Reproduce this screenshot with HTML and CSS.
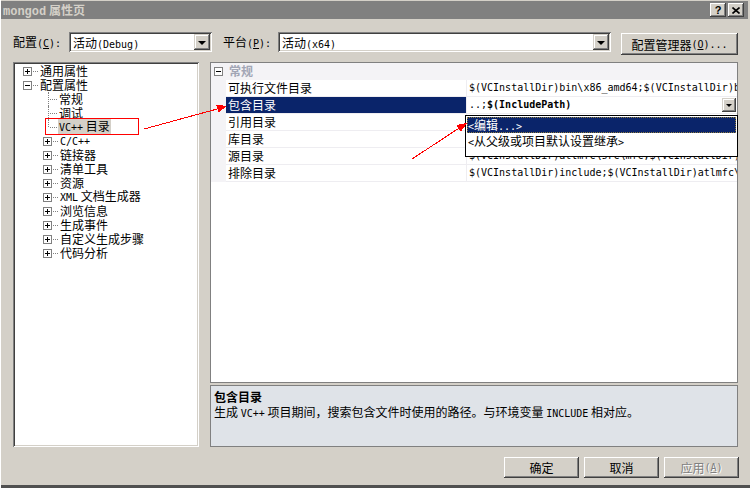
FILE: index.html
```html
<!DOCTYPE html>
<html lang="zh-CN">
<head>
  <meta charset="UTF-8">
  <title>mongod 属性页</title>
  <link rel="stylesheet" href="styles.css">
</head>
<body>

  <div class="window">
    <div class="titlebar">
      <span class="title"><span class="en">mongod</span> 属性页</span>
      <div class="caption-btns">
        <span class="cap-btn">?</span>
        <span class="cap-btn">
          <svg width="8" height="7" viewBox="0 0 8 7"><path d="M0.5 0.5 L7.5 6.5 M7.5 0.5 L0.5 6.5" stroke="#000" stroke-width="1.6" fill="none"/></svg>
        </span>
      </div>
    </div>

    <div class="content">
      <div class="config-row">
        <span class="lbl lbl-config">配置<span class="en">(<u>C</u>):</span></span>
        <div class="combo combo-config">
          <span class="combo-text">活动<span class="en">(Debug)</span></span>
          <span class="drop-btn"></span>
        </div>
        <span class="lbl lbl-platform">平台<span class="en">(<u>P</u>):</span></span>
        <div class="combo combo-platform">
          <span class="combo-text">活动<span class="en">(x64)</span></span>
          <span class="drop-btn"></span>
        </div>
        <button class="btn btn-manager">配置管理器<span class="en">(<u>O</u>)...</span></button>
      </div>

      <div class="main">
        <div class="tree">
          <div class="node lvl0"><span class="box plus"></span><span class="dots"></span><span class="label">通用属性</span></div>
          <div class="node lvl0"><span class="box"></span><span class="dots"></span><span class="label">配置属性</span></div>
          <div class="node leaf"><span class="stem"></span><span class="label">常规</span></div>
          <div class="node leaf"><span class="stem"></span><span class="label">调试</span></div>
          <div class="node leaf"><span class="stem last"></span><span class="label selected"><span class="en">VC++</span> 目录</span></div>
          <div class="node lvl1"><span class="box plus"></span><span class="dots"></span><span class="label"><span class="en">C/C++</span></span></div>
          <div class="node lvl1"><span class="box plus"></span><span class="dots"></span><span class="label">链接器</span></div>
          <div class="node lvl1"><span class="box plus"></span><span class="dots"></span><span class="label">清单工具</span></div>
          <div class="node lvl1"><span class="box plus"></span><span class="dots"></span><span class="label">资源</span></div>
          <div class="node lvl1"><span class="box plus"></span><span class="dots"></span><span class="label"><span class="en">XML</span> 文档生成器</span></div>
          <div class="node lvl1"><span class="box plus"></span><span class="dots"></span><span class="label">浏览信息</span></div>
          <div class="node lvl1"><span class="box plus"></span><span class="dots"></span><span class="label">生成事件</span></div>
          <div class="node lvl1"><span class="box plus"></span><span class="dots"></span><span class="label">自定义生成步骤</span></div>
          <div class="node lvl1"><span class="box plus"></span><span class="dots"></span><span class="label">代码分析</span></div>
        </div>

        <div class="right">
          <div class="pg">
            <div class="pg-row cat">
              <span class="pg-margin"><span class="box"></span></span>
              <span class="cat-name">常规</span>
            </div>
            <div class="pg-row">
              <span class="pg-margin"></span>
              <span class="pg-name">可执行文件目录</span>
              <span class="pg-val">$(VCInstallDir)bin\x86_amd64;$(VCInstallDir)bin;$(WindowsSdkDir)bin\NETFX 4.0 Tools;$(WindowsSdkDir)bin;$(VSInstallDir)Common7\Tools\bin;$(PATH);</span>
            </div>
            <div class="pg-row sel">
              <span class="pg-margin"></span>
              <span class="pg-name">包含目录</span>
              <span class="pg-val edit"><span>..;<b>$(IncludePath)</b></span><span class="drop-btn small"></span></span>
            </div>
            <div class="pg-row">
              <span class="pg-margin"></span>
              <span class="pg-name">引用目录</span>
              <span class="pg-val">$(VCInstallDir)atlmfc\lib\amd64;$(VCInstallDir)lib\amd64</span>
            </div>
            <div class="pg-row">
              <span class="pg-margin"></span>
              <span class="pg-name">库目录</span>
              <span class="pg-val">$(VCInstallDir)lib\amd64;$(VCInstallDir)atlmfc\lib\amd64;$(WindowsSdkDir)lib\x64;</span>
            </div>
            <div class="pg-row">
              <span class="pg-margin"></span>
              <span class="pg-name">源目录</span>
              <span class="pg-val">$(VCInstallDir)atlmfc\src\mfc;$(VCInstallDir)atlmfc\src\mfcm;$(VCInstallDir)atlmfc\src\atl;</span>
            </div>
            <div class="pg-row">
              <span class="pg-margin"></span>
              <span class="pg-name">排除目录</span>
              <span class="pg-val">$(VCInstallDir)include;$(VCInstallDir)atlmfc\include;$(WindowsSdkDir)include;$(FrameworkSDKDir)\include;</span>
            </div>

            <!-- open drop-down list of the 包含目录 value -->
            <div class="popup">
              <div class="popup-item hl"><span class="en">&lt;</span>编辑<span class="en">...&gt;</span></div>
              <div class="popup-item"><span class="en">&lt;</span>从父级或项目默认设置继承<span class="en">&gt;</span></div>
            </div>
          </div>

          <div class="desc">
            <div class="desc-title">包含目录</div>
            <div class="desc-text">生成 <span class="en">VC++</span> 项目期间，搜索包含文件时使用的路径。与环境变量 <span class="en">INCLUDE</span> 相对应。</div>
          </div>
        </div>
      </div>

      <div class="actions">
        <button class="btn">确定</button>
        <button class="btn">取消</button>
        <button class="btn disabled">应用<span class="en">(<u>A</u>)</span></button>
      </div>
    </div>

    <!-- red annotation marks drawn over the dialog -->
    <svg class="marks" width="750" height="488" viewBox="0 0 750 488">
      <rect x="45.5" y="118.5" width="93" height="16" fill="none" stroke="#f00" stroke-width="1"/>
      <line x1="144" y1="129" x2="219" y2="108.5" stroke="#f00" stroke-width="1"/>
      <polygon points="227,106 218.4,112.5 216.3,104.8" fill="#f00"/>
      <line x1="412" y1="159" x2="460" y2="127.5" stroke="#f00" stroke-width="1"/>
      <polygon points="467,123 460.8,131.8 456.4,125.1" fill="#f00"/>
    </svg>
  </div>

</body>
</html>
```

FILE: styles.css
```css
body {
  margin: 0;
  background: #d4d0c8;
  font-family: "Noto Sans CJK SC", sans-serif;
  font-size: 12px;
  color: #000;
}

.en {
  font-family: "DejaVu Sans Mono", monospace;
  font-size: 10px;
}

.window {
  position: relative;
  width: 750px;
  height: 488px;
  box-sizing: border-box;
  padding: 1px 2px 3px 1px;
  background: #d4d0c8;
  box-shadow: inset 1px 0 #fff, inset 0 -3px #505050;
  display: flex;
  flex-direction: column;
}

/* title bar */
.titlebar {
  height: 18px;
  background: #808080;
  color: #d4d0c8;
  font-weight: bold;
  display: flex;
  align-items: center;
  justify-content: space-between;
  padding: 0 4px 0 2px;
}

.title .en {
  font-family: "Liberation Mono", monospace;
  font-size: 12px;
  font-weight: bold;
}

.caption-btns {
  display: flex;
  gap: 2px;
}

.cap-btn {
  width: 16px;
  height: 14px;
  box-sizing: border-box;
  display: flex;
  align-items: center;
  justify-content: center;
  background: #d4d0c8;
  color: #000;
  font-family: "Liberation Sans", sans-serif;
  font-size: 11px;
  font-weight: bold;
  box-shadow: inset -1px -1px #404040, inset 1px 1px #fff, inset -2px -2px #808080;
}

.content {
  flex: 1;
  display: flex;
  flex-direction: column;
  padding: 0 10px 0 12px;
}

/* configuration row */
.config-row {
  margin-top: 13px;
  height: 20px;
  display: flex;
  align-items: flex-start;
}

.lbl {
  height: 20px;
  line-height: 20px;
  white-space: nowrap;
}

.lbl-config {
  width: 56px;
}

.lbl-platform {
  width: 55px;
  margin-left: 11px;
}

.combo {
  height: 20px;
  box-sizing: border-box;
  padding: 2px;
  background: #fff;
  display: flex;
  align-items: center;
  justify-content: space-between;
  box-shadow: inset 1px 1px #808080, inset -1px -1px #fff, inset 2px 2px #404040, inset -2px -2px #d4d0c8;
}

.combo-config {
  width: 143px;
}

.combo-platform {
  width: 333px;
}

.combo-text {
  padding-left: 2px;
  white-space: nowrap;
}

.drop-btn {
  width: 16px;
  height: 16px;
  flex: none;
  box-sizing: border-box;
  display: flex;
  align-items: center;
  justify-content: center;
  background: #d4d0c8;
  box-shadow: inset -1px -1px #404040, inset 1px 1px #d4d0c8, inset -2px -2px #808080, inset 2px 2px #fff;
}

.drop-btn::after {
  content: "";
  border-left: 4px solid transparent;
  border-right: 4px solid transparent;
  border-top: 4px solid #000;
  margin-top: 1px;
}

.drop-btn.small {
  width: 14px;
  height: 14px;
  margin-right: 1px;
}

.drop-btn.small::after {
  border-left-width: 3px;
  border-right-width: 3px;
  border-top-width: 3px;
}

.btn {
  width: 75px;
  height: 21px;
  padding: 0;
  border: none;
  box-sizing: border-box;
  display: flex;
  align-items: center;
  justify-content: center;
  background: #d4d0c8;
  color: #000;
  font-family: inherit;
  font-size: 12px;
  white-space: nowrap;
  box-shadow: inset -1px -1px #404040, inset 1px 1px #fff, inset -2px -2px #808080, inset 2px 2px #d4d0c8;
}

.btn-manager {
  width: 117px;
  height: 22px;
  margin-top: 1px;
  margin-left: 10px;
}

.btn.disabled {
  color: #808080;
  text-shadow: 1px 1px #fff;
}

/* main area */
.main {
  margin-top: 10px;
  height: 385px;
  display: flex;
  gap: 11px;
}

.tree {
  width: 186px;
  flex: none;
  box-sizing: border-box;
  padding: 2px;
  background: #fff;
  box-shadow: inset 1px 1px #808080, inset -1px -1px #fff, inset 2px 2px #404040, inset -2px -2px #d4d0c8;
}

.node {
  height: 14px;
  display: flex;
  align-items: center;
  white-space: nowrap;
}

.lvl0 {
  padding-left: 8px;
}

.lvl1 {
  padding-left: 28px;
}

.leaf {
  padding-left: 33px;
}

.box {
  width: 9px;
  height: 9px;
  flex: none;
  box-sizing: border-box;
  border: 1px solid #808080;
  background: #fff;
  position: relative;
}

.box::before {
  content: "";
  position: absolute;
  left: 1px;
  top: 3px;
  width: 5px;
  height: 1px;
  background: #000;
}

.box.plus::after {
  content: "";
  position: absolute;
  left: 3px;
  top: 1px;
  width: 1px;
  height: 5px;
  background: #000;
}

.dots {
  width: 5px;
  margin-left: 1px;
  margin-right: 1px;
  border-top: 1px dotted #808080;
}

.stem {
  width: 8px;
  height: 14px;
  flex: none;
  align-self: flex-start;
  margin-right: 1px;
  border-left: 1px dotted #808080;
  position: relative;
}

.stem.last {
  height: 7px;
}

.stem::after {
  content: "";
  position: absolute;
  left: 1px;
  top: 7px;
  width: 7px;
  border-top: 1px dotted #808080;
}

.label {
  padding: 0 1px;
  line-height: 14px;
}

.label.selected {
  background: #d4d0c8;
}

/* property grid */
.right {
  flex: 1;
  display: flex;
  flex-direction: column;
  gap: 2px;
}

.pg {
  position: relative;
  height: 321px;
  box-sizing: border-box;
  border: 1px solid #808080;
  background: #fff;
}

.pg-row {
  display: grid;
  grid-template-columns: 15px 240px 1fr;
  height: 17px;
}

.pg-margin {
  background: #f4f3f6;
  display: flex;
  align-items: center;
  justify-content: center;
}

.pg-name,
.pg-val {
  line-height: 16px;
  border-bottom: 1px solid #eeedf1;
  padding-left: 2px;
  overflow: hidden;
  white-space: nowrap;
}

.pg-val {
  border-left: 1px solid #eeedf1;
  font-family: "DejaVu Sans Mono", monospace;
  font-size: 10px;
}

.pg-val.edit {
  display: flex;
  align-items: center;
  justify-content: space-between;
}

.cat {
  background: #f4f3f6;
}

.cat-name {
  grid-column: 2 / 4;
  padding-left: 3px;
  line-height: 16px;
  font-weight: bold;
  color: #a2a6b5;
}

.sel .pg-name {
  background: #0a246a;
  color: #fff;
}

.popup {
  position: absolute;
  left: 254px;
  top: 52px;
  width: 273px;
  height: 42px;
  box-sizing: border-box;
  padding: 1px;
  border: 1px solid #000;
  background: #fff;
}

.popup-item {
  height: 16px;
  line-height: 16px;
  padding-left: 1px;
  white-space: nowrap;
}

.popup-item.hl {
  background: #0a246a;
  color: #fff;
  outline: 1px dotted #8c7b3f;
  outline-offset: -1px;
}

.desc {
  height: 62px;
  box-sizing: border-box;
  border: 1px solid #808080;
  background: #dfe3e8;
  padding: 3px;
}

.desc-title {
  font-weight: bold;
  line-height: 15px;
}

.desc-text {
  line-height: 15px;
}

/* bottom buttons */
.actions {
  margin-top: 10px;
  margin-right: -1px;
  display: flex;
  justify-content: flex-end;
  gap: 5px;
}

.marks {
  position: absolute;
  left: 0;
  top: 0;
  pointer-events: none;
  shape-rendering: crispEdges;
}
```
